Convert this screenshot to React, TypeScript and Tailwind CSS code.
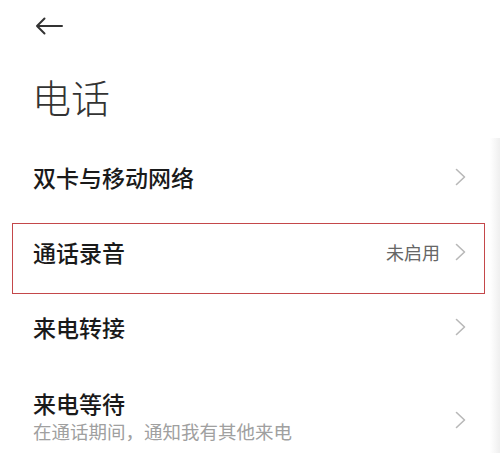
import React from "react";

const FONT = '"Noto Sans CJK SC", "Noto Sans", sans-serif';

type Row = {
  title: string;
  value?: string;
  subtitle?: string;
  marked?: boolean;
};

const ROWS: Row[] = [
  { title: "双卡与移动网络" },
  { title: "通话录音", value: "未启用", marked: true },
  { title: "来电转接" },
  { title: "来电等待", subtitle: "在通话期间，通知我有其他来电" },
];

function Chevron() {
  return (
    <svg width="11" height="18" viewBox="0 0 11 18" fill="none" className="shrink-0">
      <path d="M1.5 1.5 L9.5 9 L1.5 16.5" stroke="#b8b8b8" strokeWidth="1.6" strokeLinecap="round" strokeLinejoin="round" />
    </svg>
  );
}

function SettingRow({ row }: { row: Row }) {
  if (row.subtitle) {
    return (
      <div className="flex items-center pl-[33px] pr-[34px] pt-[25px]">
        <div className="flex-1">
          <div className="text-[23px] leading-[28px] font-medium text-[#1a1a1a]">{row.title}</div>
          <div className="mt-[2px] text-[18.5px] leading-[24px] text-[#a0a0a0]">{row.subtitle}</div>
        </div>
        <div className="mt-[8px]">
          <Chevron />
        </div>
      </div>
    );
  }

  return (
    <div className="relative flex h-[75px] items-center pl-[33px] pr-[34px]">
      <div className="flex-1 text-[23px] leading-[28px] font-medium text-[#1a1a1a]">{row.title}</div>
      {row.value && <span className="mr-[15px] text-[18px] leading-[24px] text-[#666666]">{row.value}</span>}
      <Chevron />
      {/* annotation box drawn over the row */}
      {row.marked && (
        <div className="pointer-events-none absolute left-[12px] top-[9px] h-[71px] w-[473px] border-[1.5px] border-[#c4474a]" />
      )}
    </div>
  );
}

export default function App() {
  return (
    <div className="relative h-[453px] w-[500px] overflow-hidden bg-white" style={{ fontFamily: FONT }}>
      {/* Header */}
      <div className="flex h-[52px] items-center pl-[35px]">
        <svg width="28" height="18" viewBox="0 0 28 18" fill="none">
          <path d="M27 9 H2 M9.5 1.5 L2 9 L9.5 16.5" stroke="#333333" strokeWidth="2" strokeLinecap="round" strokeLinejoin="round" />
        </svg>
      </div>

      <div className="mt-[20px] mb-[19px] h-[48px] pl-[32px] text-[39px] leading-[48px] font-light text-[#333333]">电话</div>

      {/* List */}
      <div className="flex flex-col">
        {ROWS.map((row) => (
          <SettingRow key={row.title} row={row} />
        ))}
      </div>

      <div className="absolute right-0 top-[138px] bottom-0 w-[10px] bg-linear-to-r from-white to-[#efefef]" />
    </div>
  );
}
